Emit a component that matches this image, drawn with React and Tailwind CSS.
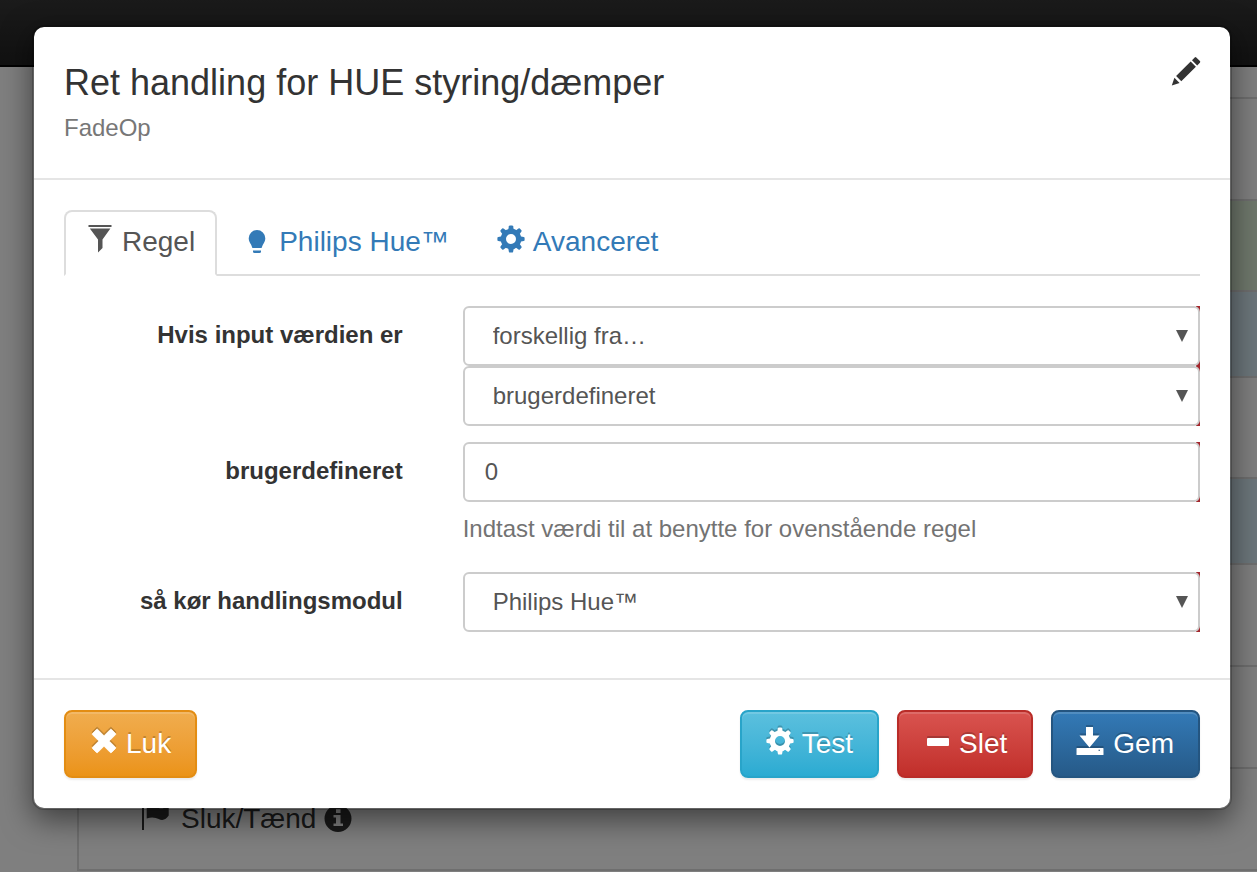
import { useState } from "react";

const GEAR_TEETH = [0, 45, 90, 135, 180, 225, 270, 315];

function Icon({ children, className = "" }) {
  return (
    <svg
      viewBox="0 0 28 36"
      aria-hidden="true"
      className={`h-9 w-7 shrink-0 overflow-visible fill-current ${className}`}
    >
      {children}
    </svg>
  );
}

function FilterIcon() {
  return (
    <Icon>
      <path d="M2.500 1h23v2h-23zM3.800 4.500h20.600L16.500 15.500V24L12 28.500V15.500z" />
    </Icon>
  );
}

function BulbIcon() {
  return (
    <Icon>
      <path d="M14 6a8.300 8.300 0 0 0-8.300 8.300c0 2.800 1.300 4.500 2.300 6.200.7 1.200.9 2.300 1.200 3 .2.400.4.500.8.500h8c.4 0 .6-.1.8-.5.300-.7.500-1.800 1.200-3 1-1.700 2.300-3.400 2.300-6.200A8.300 8.300 0 0 0 14 6z" />
      <path d="M10 26.600h8v.9q0 1.500-1.500 1.500h-5q-1.500 0-1.500-1.500z" />
    </Icon>
  );
}

function GearIcon() {
  return (
    <Icon>
      <circle cx="14" cy="15" r="7.700" fill="none" stroke="currentColor" strokeWidth="5.400" />
      {GEAR_TEETH.map((angle) => (
        <path
          key={angle}
          d="M11.200 6l.700-3.700q.2-.9 1-.9h2.200q.8 0 1 .9L16.800 6z"
          transform={`rotate(${angle} 14 15)`}
        />
      ))}
    </Icon>
  );
}

function CrossIcon() {
  return (
    <Icon>
      <path d="M6.500 3.500q.6-.6 1.200 0L14 9.800l6.300-6.300q.6-.6 1.200 0l4 4q.6.6 0 1.200L19.200 15l6.300 6.300q.6.6 0 1.200l-4 4q-.6.6-1.200 0L14 20.200l-6.300 6.300q-.6.6-1.200 0l-4-4q-.6-.6 0-1.200L8.800 15 2.500 8.700q-.6-.6 0-1.200z" stroke="currentColor" strokeWidth=".8" />
    </Icon>
  );
}

function MinusIcon() {
  return (
    <Icon>
      <rect x="4" y="12" width="22" height="8" rx="1" />
    </Icon>
  );
}

function SaveIcon() {
  return (
    <Icon>
      <path d="M9 1h7v8.500h6.500L12.500 21.500 2.500 9.500H9z" />
      <path
        fillRule="evenodd"
        d="M0 22h26q.5 0 .5.500v6q0 .5-.5.500H0q-.5 0-.5-.5v-6q0-.5.5-.5zM21.500 23.700v1h1.500v-1z"
      />
    </Icon>
  );
}

function PencilIcon() {
  return (
    <svg viewBox="0 0 28 28" aria-hidden="true" className="size-7 overflow-visible fill-current">
      <path d="M20 3.200L22.700.5q.8-.8 1.600 0l3.600 3.600q.8.800 0 1.600L25.200 8.400zM18.700 4.500l5.200 5.200L9.300 24.300l-5.200-5.200zM2.400 20.800l5.200 5.200L-.2 28.600z" />
    </svg>
  );
}

function TabLink({ active, onClick, children }) {
  return (
    <a
      href="#"
      role="tab"
      aria-selected={active}
      onClick={onClick}
      className={`-mb-[2px] mr-1 flex items-center gap-2 rounded-t-lg border-2 px-5 pt-[10px] pb-3 leading-[40px] ${
        active
          ? "border-[#ddd] border-b-white bg-white text-[#555]"
          : "border-transparent text-[#337ab7]"
      }`}
    >
      {children}
    </a>
  );
}

function FormRow({ label, id, children }) {
  return (
    <div className="-mx-[30px] mb-4 flex">
      <label
        htmlFor={id}
        className="w-1/3 px-[30px] pt-3 text-right text-2xl leading-[34px] font-bold text-[#333]"
      >
        {label}
      </label>
      <div className="w-2/3 px-[30px]">{children}</div>
    </div>
  );
}

const CONTROL =
  "block h-[60px] w-full appearance-none rounded-md border-2 border-[#ccc] bg-white text-2xl text-[#555] outline-none";

// Required fields show red behind their right-hand corners
function Required({ children }) {
  return (
    <div className="relative bg-[linear-gradient(to_left,#a3262c_4px,transparent_4px)]">
      {children}
    </div>
  );
}

function SelectBox({ id, label, options }) {
  return (
    <Required>
      <select id={id} aria-label={label} className={`${CONTROL} pr-12 pl-7`}>
        {options.map((option) => (
          <option key={option}>{option}</option>
        ))}
      </select>
      <svg
        viewBox="0 0 12 12"
        aria-hidden="true"
        className="pointer-events-none absolute top-6 right-3 size-3 fill-[#555]"
      >
        <path d="M0 0h12L6 12z" />
      </svg>
    </Required>
  );
}

function Button({ className, children }) {
  return (
    <button
      type="button"
      className={`flex items-center gap-2 rounded-lg border-2 bg-linear-to-b px-6 py-3 leading-[40px] text-white shadow-[inset_0_2px_0_rgba(255,255,255,0.15),0_2px_2px_rgba(0,0,0,0.075)] [text-shadow:0_-2px_0_rgba(0,0,0,0.2)] [&_svg]:drop-shadow-[0_-2px_0_rgba(0,0,0,0.2)] ${className}`}
    >
      {children}
    </button>
  );
}

const ROWS = [
  "h-[102px]",
  "h-[91px] bg-[#dff0d8]",
  "h-[86px] bg-[#d9edf7]",
  "h-[101px]",
  "h-[86px] bg-[#d9edf7]",
  "h-[102px]",
  "h-[102px]",
];

function Backdrop() {
  return (
    <div aria-hidden="true">
      <div className="h-[67px] border-b-2 border-black bg-linear-to-b from-[#363636] to-[#222]" />
      <div className="mt-[30px] ml-[77px] border-l-2 border-[#ddd]">
        {ROWS.map((row, i) => (
          <div key={i} className={`border-t-2 border-[#ddd] ${row}`} />
        ))}
        <div className="flex items-center border-y-2 border-[#ddd] px-[60px] py-[30px] leading-[40px]">
          <svg viewBox="0 0 28 28" className="size-7 overflow-visible fill-current">
            <path d="M3 0h2v25H3zM7.700 2c4-2 7-2 10 0s7 1.500 12-.5V10.500c-2.500 4-6 5.500-10 3.500-3-1.500-7-2.500-12-.5z" />
          </svg>
          <span className="ml-[14px]">Sluk/Tænd</span>
          <svg viewBox="0 0 28 28" className="ml-2 size-7 fill-current">
            <path
              fillRule="evenodd"
              d="M14 0a13.500 13.500 0 1 0 0 27 13.500 13.500 0 0 0 0-27zM12 4h4.500v4H12zM9.500 10H16.500v8.500h2.500v2.500h-9.500v-2.500H12v-6H9.500z"
            />
          </svg>
        </div>
      </div>
    </div>
  );
}

export default function App() {
  const [tab, setTab] = useState("regel");

  const select = (name) => (e) => {
    e.preventDefault();
    setTab(name);
  };

  return (
    <div className="relative h-screen overflow-hidden bg-white font-['Liberation_Sans',Arial,sans-serif] text-[28px] text-[#333]">
      <Backdrop />

      <div className="absolute inset-0 bg-black/50 pt-[25px] pr-[25px] pl-8">
        <div
          role="dialog"
          aria-labelledby="modal-title"
          className="rounded-xl border-2 border-black/20 bg-white bg-clip-padding shadow-[0_10px_30px_rgba(0,0,0,0.5)]"
        >
          <header className="flex items-start justify-between border-b-2 border-[#e5e5e5] p-[30px]">
            <div>
              <h1 id="modal-title" className="text-4xl leading-[51px]">
                Ret handling for HUE styring/dæmper
              </h1>
              <p className="text-2xl leading-[40px] text-[#777]">FadeOp</p>
            </div>
            <button type="button" aria-label="Rediger">
              <PencilIcon />
            </button>
          </header>

          <div className="p-[30px]">
            <nav role="tablist" className="mb-[30px] flex border-b-2 border-[#ddd]">
              <TabLink active={tab === "regel"} onClick={select("regel")}>
                <FilterIcon />
                Regel
              </TabLink>
              <TabLink active={tab === "hue"} onClick={select("hue")}>
                <BulbIcon />
                Philips Hue™
              </TabLink>
              <TabLink active={tab === "avanceret"} onClick={select("avanceret")}>
                <GearIcon />
                Avanceret
              </TabLink>
            </nav>

            <form>
              <FormRow label="Hvis input værdien er" id="operator">
                <SelectBox id="operator" options={["forskellig fra…", "lig med"]} />
                <SelectBox id="kind" label="Værditype" options={["brugerdefineret"]} />
              </FormRow>
              <FormRow label="brugerdefineret" id="value">
                <Required>
                  <input id="value" type="text" defaultValue="0" className={`${CONTROL} px-5`} />
                </Required>
                <p className="my-[10px] text-2xl leading-[34px] text-[#737373]">
                  Indtast værdi til at benytte for ovenstående regel
                </p>
              </FormRow>
              <FormRow label="så kør handlingsmodul" id="module">
                <SelectBox id="module" options={["Philips Hue™"]} />
              </FormRow>
            </form>
          </div>

          <footer className="flex gap-[18px] border-t-2 border-[#e5e5e5] p-[30px]">
            <Button className="mr-auto border-[#e38d13] from-[#f0ad4e] to-[#eb9316]">
              <CrossIcon />
              Luk
            </Button>
            <Button className="border-[#28a4c9] from-[#5bc0de] to-[#2aabd2]">
              <GearIcon />
              Test
            </Button>
            <Button className="border-[#b92c28] from-[#d9534f] to-[#c12e2a]">
              <MinusIcon />
              Slet
            </Button>
            <Button className="border-[#245580] from-[#337ab7] to-[#265a88]">
              <SaveIcon />
              Gem
            </Button>
          </footer>
        </div>
      </div>
    </div>
  );
}
